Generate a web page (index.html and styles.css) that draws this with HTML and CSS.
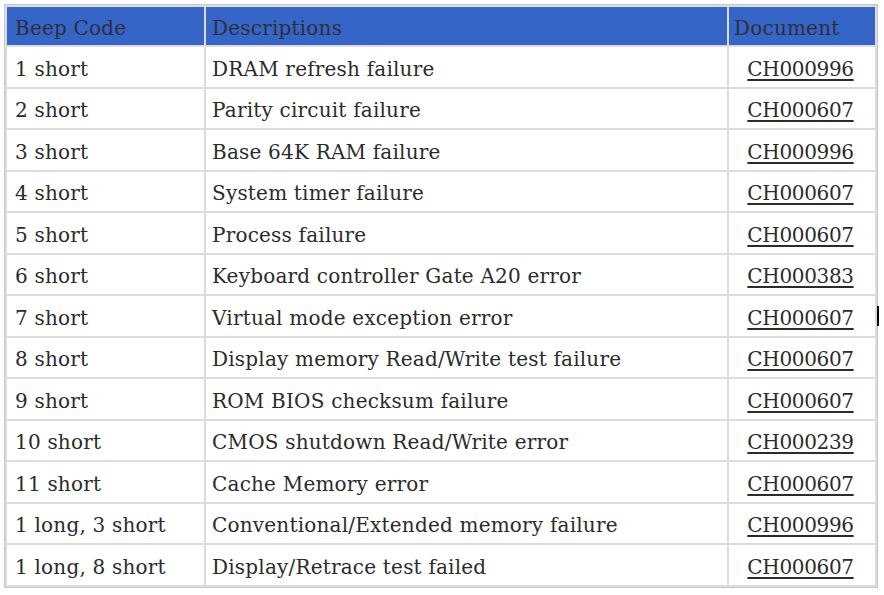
FILE: index.html
```html
<!DOCTYPE html>
<html>
<head>
<meta charset="utf-8">
<link rel="stylesheet" href="styles.css">
</head>
<body>
<div class="wrap">
<table class="codes">
<colgroup><col class="c1"><col class="c2"><col class="c3"></colgroup>
<thead>
<tr><th>Beep Code</th><th>Descriptions</th><th>Document</th></tr>
</thead>
<tbody>
<tr><td>1 short</td><td>DRAM refresh failure</td><td class="doc"><a href="#">CH000996</a></td></tr>
<tr><td>2 short</td><td>Parity circuit failure</td><td class="doc"><a href="#">CH000607</a></td></tr>
<tr><td>3 short</td><td>Base 64K RAM failure</td><td class="doc"><a href="#">CH000996</a></td></tr>
<tr><td>4 short</td><td>System timer failure</td><td class="doc"><a href="#">CH000607</a></td></tr>
<tr><td>5 short</td><td>Process failure</td><td class="doc"><a href="#">CH000607</a></td></tr>
<tr><td>6 short</td><td>Keyboard controller Gate A20 error</td><td class="doc"><a href="#">CH000383</a></td></tr>
<tr><td>7 short</td><td>Virtual mode exception error</td><td class="doc"><a href="#">CH000607</a></td></tr>
<tr><td>8 short</td><td>Display memory Read/Write test failure</td><td class="doc"><a href="#">CH000607</a></td></tr>
<tr><td>9 short</td><td>ROM BIOS checksum failure</td><td class="doc"><a href="#">CH000607</a></td></tr>
<tr><td>10 short</td><td>CMOS shutdown Read/Write error</td><td class="doc"><a href="#">CH000239</a></td></tr>
<tr><td>11 short</td><td>Cache Memory error</td><td class="doc"><a href="#">CH000607</a></td></tr>
<tr><td>1 long, 3 short</td><td>Conventional/Extended memory failure</td><td class="doc"><a href="#">CH000996</a></td></tr>
<tr><td>1 long, 8 short</td><td>Display/Retrace test failed</td><td class="doc"><a href="#">CH000607</a></td></tr>
</tbody>
</table>
<span class="cursor"></span>
</div>
</body>
</html>
```
FILE: styles.css
```css
html, body { margin: 0; padding: 0; background: #fff; }
body { font-family: "DejaVu Serif", serif; color: #2b2b2b; }
.wrap { position: relative; padding: 4px 0 0 4px; width: 874px; }
.codes {
  border-collapse: separate;
  border-spacing: 2px;
  border: 1px solid #c8c8c8;
  background: #dcdcdc;
  width: 874px;
  table-layout: fixed;
  font-size: 20px;
}
.c1 { width: 197px; }
.c2 { width: 521px; }
.c3 { width: 146px; }
.codes th {
  background: #3665c8;
  color: #2e2e3a;
  font-weight: normal;
  text-align: left;
  box-sizing: border-box;
  height: 38px;
  padding: 4px 0 0 8px;
  font-size: 20px;
  letter-spacing: 0.2px;
}
.codes td {
  background: #fff;
  box-sizing: border-box;
  height: 39.5px;
  padding: 4px 0 0 8px;
  white-space: nowrap;
  letter-spacing: 0.2px;
}
.codes td:nth-child(2) { padding-left: 6px; }
.codes th:nth-child(2) { padding-left: 6px; }
.codes th:nth-child(3) { padding-left: 5px; }
.codes td.doc { text-align: center; padding: 4px 3px 0 0; }
.codes a { color: #2b2b2b; letter-spacing: -0.35px; text-decoration: underline; text-underline-offset: 3px; }
.cursor { position: absolute; left: 877px; top: 306px; width: 2px; height: 20px; background: #000; }
```
